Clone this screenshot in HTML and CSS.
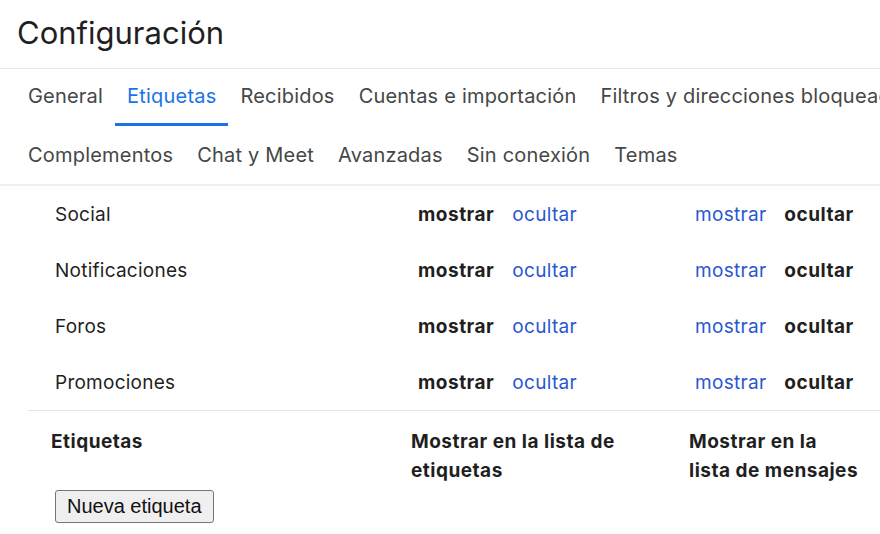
FILE: index.html
```html
<!DOCTYPE html>
<html lang="es">
<head>
<meta charset="utf-8">
<title>Configuración</title>
<link rel="stylesheet" href="styles.css">
</head>
<body>
<div class="page">
  <header class="title-bar">
    <h1 class="title">Configuración</h1>
  </header>
  <nav class="tabs">
    <div class="tab-row">
      <span class="tab">General</span>
      <span class="tab active">Etiquetas</span>
      <span class="tab">Recibidos</span>
      <span class="tab">Cuentas e importación</span>
      <span class="tab">Filtros y direcciones bloqueadas</span>
    </div>
    <div class="tab-row">
      <span class="tab">Complementos</span>
      <span class="tab">Chat y Meet</span>
      <span class="tab">Avanzadas</span>
      <span class="tab">Sin conexión</span>
      <span class="tab">Temas</span>
    </div>
  </nav>
  <section class="categories">
    <div class="cat-row">
      <span class="cat-name">Social</span>
      <span class="opts"><b>mostrar</b><a>ocultar</a></span>
      <span class="opts"><a>mostrar</a><b>ocultar</b></span>
    </div>
    <div class="cat-row">
      <span class="cat-name">Notificaciones</span>
      <span class="opts"><b>mostrar</b><a>ocultar</a></span>
      <span class="opts"><a>mostrar</a><b>ocultar</b></span>
    </div>
    <div class="cat-row">
      <span class="cat-name">Foros</span>
      <span class="opts"><b>mostrar</b><a>ocultar</a></span>
      <span class="opts"><a>mostrar</a><b>ocultar</b></span>
    </div>
    <div class="cat-row">
      <span class="cat-name">Promociones</span>
      <span class="opts"><b>mostrar</b><a>ocultar</a></span>
      <span class="opts"><a>mostrar</a><b>ocultar</b></span>
    </div>
  </section>
  <section class="labels">
    <div class="labels-head">
      <span class="h h1">Etiquetas</span>
      <span class="h h2">Mostrar en la lista de<br>etiquetas</span>
      <span class="h h3">Mostrar en la<br>lista de mensajes</span>
    </div>
    <button class="new-label">Nueva etiqueta</button>
  </section>
</div>
</body>
</html>
```
FILE: styles.css
```css
* { box-sizing: border-box; }
html, body { margin: 0; padding: 0; background: #fff; }
body {
  width: 880px;
  height: 534px;
  overflow: hidden;
  font-family: Inter, Roboto, "Liberation Sans", Arial, sans-serif;
  color: #1f1f1f;
}
.page { width: 880px; }
.title-bar {
  height: 69px;
  border-bottom: 1px solid #e8e8e8;
  padding-left: 17px;
}
.title {
  margin: 0;
  font-weight: 400;
  font-size: 31px;
  line-height: 66px;
  color: #1f1f1f;
}
.tabs {
  border-bottom: 2px solid #efefef;
  padding-left: 16px;
}
.tab-row {
  display: flex;
  white-space: nowrap;
  overflow: hidden;
  height: 57px;
}
.tab-row + .tab-row { height: 58px; }
.tab {
  padding: 0 12px;
  font-size: 20px;
  letter-spacing: 0.2px;
  line-height: 54px;
  color: #444746;
  border-bottom: 3px solid transparent;
}
.tab-row + .tab-row .tab { line-height: 58px; }
.tab.active {
  color: #1a73e8;
  border-bottom-color: #1a73e8;
}
.categories {
  margin-left: 28px;
  border-bottom: 1px solid #e3e3e3;
}
.cat-row {
  display: grid;
  grid-template-columns: 363px 277px 1fr;
  height: 56px;
  align-items: center;
  padding-left: 27px;
  font-size: 19px;
  letter-spacing: 0.25px;
}
.cat-name { color: #1f1f1f; }
.opts { display: flex; gap: 18px; white-space: nowrap; }
.opts b { font-weight: 700; color: #1f1f1f; letter-spacing: 0.5px; }
.opts a { color: #2a57d0; letter-spacing: 0.3px; }
.labels { padding-left: 51px; }
.labels-head {
  display: grid;
  grid-template-columns: 360px 278px 180px;
  padding-top: 16px;
  font-size: 19px;
  font-weight: 700;
  letter-spacing: 0.5px;
  line-height: 29px;
}
.h { white-space: nowrap; }
.new-label {
  margin: 5px 0 0 4px;
  height: 33px;
  padding: 0 11px;
  font-family: "Liberation Sans", Arial, sans-serif;
  font-size: 20px;
  color: #111;
  background: #efefef;
  border: 1px solid #767676;
  border-radius: 3px;
}
```
